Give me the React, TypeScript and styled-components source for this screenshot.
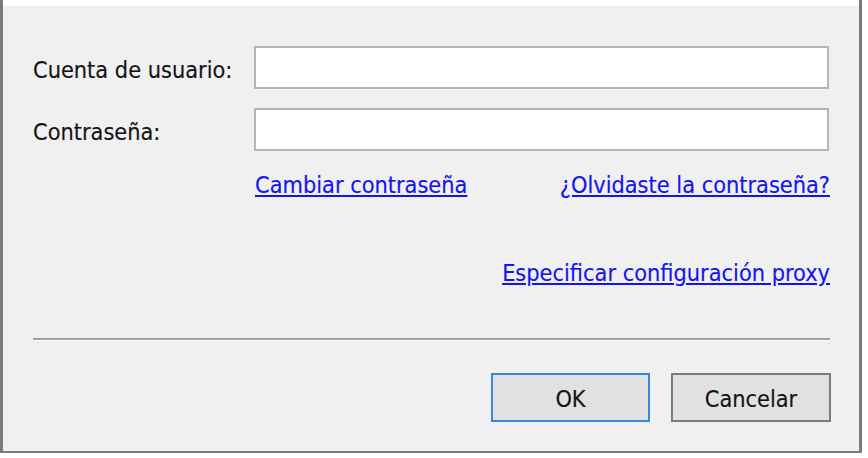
import React from "react";
import styled, { createGlobalStyle } from "styled-components";

const Global = createGlobalStyle`
  html, body {
    margin: 0;
    padding: 0;
    background: #ffffff;
  }
  body {
    width: 868px;
    height: 458px;
    overflow: hidden;
  }
`;

const Frame = styled.div`
  box-sizing: border-box;
  width: 862px;
  height: 453px;
  border-left: 3px solid #7a7a7a;
  border-right: 3px solid #7a7a7a;
  border-bottom: 2px solid #7a7a7a;
  display: flex;
  flex-direction: column;
  font-family: "DejaVu Sans Condensed", "DejaVu Sans", sans-serif;
  font-stretch: condensed;
  font-size: 23.3px;
  line-height: 27px;
  color: #141414;
  -webkit-text-stroke: 0.15px currentColor;
`;

const TopStrip = styled.div`
  height: 6px;
  background: #ffffff;
  flex: none;
`;

const Body = styled.div`
  flex: 1;
  background: #f0f0f0;
  padding: 40px 30px 0 30px;
  display: flex;
  flex-direction: column;
`;

const FormGrid = styled.div`
  display: grid;
  grid-template-columns: 221px 575px;
  row-gap: 19px;
`;

const Label = styled.label`
  display: flex;
  align-items: center;
  padding-top: 3px;
  white-space: nowrap;
`;

const Field = styled.input`
  box-sizing: border-box;
  width: 575px;
  height: 43px;
  margin: 0;
  border: 2px solid #b4b4bc;
  background: #ffffff;
  outline: none;
  font: inherit;
  padding: 0 6px;
`;

const LinkRow = styled.div<{ $top: number; $justify: string }>`
  display: flex;
  justify-content: ${(p) => p.$justify};
  margin-top: ${(p) => p.$top}px;
  margin-left: 222px;
  width: 575px;
`;

const Link = styled.a`
  color: #1414f0;
  text-decoration: underline;
  text-underline-offset: 2px;
  cursor: pointer;
  white-space: nowrap;
`;

const Separator = styled.div`
  margin-top: 52px;
  height: 2px;
  background: #a0a0a0;
  border-bottom: 1px solid #ffffff;
  width: 797px;
`;

const ButtonRow = styled.div`
  display: flex;
  justify-content: flex-end;
  gap: 21px;
  margin-top: 32px;
  width: 798px;
`;

const Button = styled.button<{ $primary?: boolean }>`
  box-sizing: border-box;
  width: ${(p) => (p.$primary ? 159 : 160)}px;
  height: 49px;
  margin: 0;
  background: #e1e1e1;
  border: 2px solid ${(p) => (p.$primary ? "#3a86dc" : "#7c7c7c")};
  font: inherit;
  color: #141414;
  padding: 2px 0 0 0;
`;

export default function App() {
  return (
    <>
      <Global />
      <Frame>
        <TopStrip />
        <Body>
          <FormGrid>
            <Label>Cuenta de usuario:</Label>
            <Field type="text" />
            <Label>Contraseña:</Label>
            <Field type="password" />
          </FormGrid>
          <LinkRow $top={20} $justify="space-between">
            <Link>Cambiar contraseña</Link>
            <Link>¿Olvidaste la contraseña?</Link>
          </LinkRow>
          <LinkRow $top={61} $justify="flex-end">
            <Link>Especificar configuración proxy</Link>
          </LinkRow>
          <Separator />
          <ButtonRow>
            <Button $primary>OK</Button>
            <Button>Cancelar</Button>
          </ButtonRow>
        </Body>
      </Frame>
    </>
  );
}
